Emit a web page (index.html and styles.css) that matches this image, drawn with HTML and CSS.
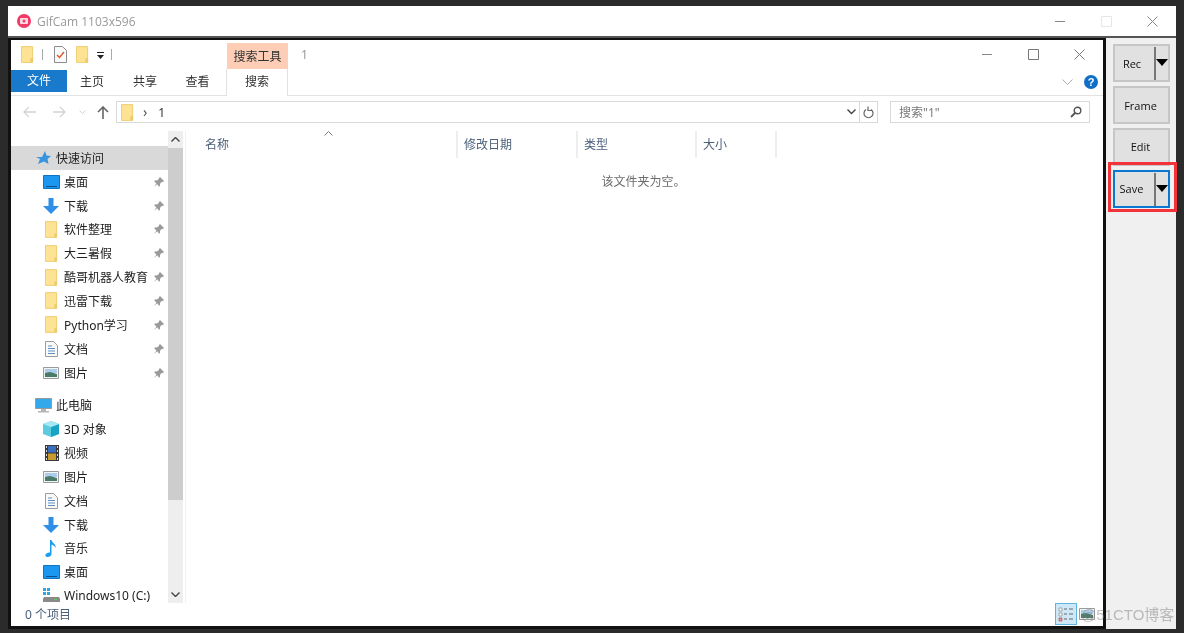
FILE: index.html
```html
<!DOCTYPE html>
<html lang="zh-CN">
<head>
    <meta charset="UTF-8">
    <title>GifCam 1103x596</title>
    <link rel="stylesheet" href="styles.css">
</head>
<body>
    <svg class="sprite" width="0" height="0">
        <symbol id="i-folder" viewBox="0 0 14 18">
            <path d="M.5.5h12v17H.5z" fill="#ffe394" stroke="#eecb6a"/>
            <path d="M10 13h3v4.5h-3z" fill="#eccb6c"/>
        </symbol>
        <symbol id="i-pin" viewBox="0 0 12 12">
            <path d="M7 1l4 4-1 1-1-.3-2 2 .1 2-1 1-2-2.400L1 11l2.400-3.600L1.200 5.300l1-1 2 .1 2-2L6 2z" fill="#9a9a9a"/>
        </symbol>
        <symbol id="i-desktop" viewBox="0 0 17 14">
            <path d="M.5.5h16v13H.5z" fill="#1b97f0" stroke="#0f74c4"/>
            <path d="M3 11.500h11" stroke="#0a4f8e"/>
        </symbol>
        <symbol id="i-down" viewBox="0 0 16 16">
            <path d="M5.500 0h5v8H16l-8 8-8-8h5.500z" fill="#2f8fe6"/>
        </symbol>
        <symbol id="i-doc" viewBox="0 0 13 16">
            <path d="M.5.500h8l4 4v11H.5z" fill="#fafafa" stroke="#9b9b9b"/>
            <path d="M3 5h4M3 7.500h7M3 10h7M3 12.500h7" stroke="#5b8fc2"/>
        </symbol>
        <symbol id="i-pic" viewBox="0 0 16 12">
            <path d="M.5.500h15v11H.5z" fill="#f3f3f3" stroke="#9b9b9b"/>
            <path d="M2 2h12v4H2z" fill="#a9cdea"/>
            <path d="M2 6l5-1 7 2v3H2z" fill="#4c7a6a"/>
        </symbol>
        <symbol id="i-film" viewBox="0 0 14 16">
            <path d="M0 0h14v16H0z" fill="#3a3a3a"/>
            <path d="M1 1h1v2H1zM1 5h1v2H1zM1 9h1v2H1zM1 13h1v2H1zM12 1h1v2h-1zM12 5h1v2h-1zM12 9h1v2h-1zM12 13h1v2h-1z" fill="#ddd"/>
            <path d="M3 1h8v6.500H3z" fill="#3a6fc0"/>
            <path d="M3 8.500h8V15H3z" fill="#c99a2e"/>
        </symbol>
        <symbol id="i-cube" viewBox="0 0 16 16">
            <path d="M8 0l8 3v10l-8 3-8-3V3z" fill="#5ccbe0"/>
            <path d="M8 6l8-3v10l-8 3z" fill="#17a3c4"/>
            <path d="M8 0l8 3-8 3-8-3z" fill="#a6e8f2"/>
        </symbol>
        <symbol id="i-note" viewBox="0 0 12 17">
            <path d="M5 0h1.500c.5 3 5 4 4 8-.5-2-2.500-3-4-3.500V14c0 2-2 3-4 3s-2.500-1.500-2-2.500S3 12 5 12.500z" fill="#1c9cf0"/>
        </symbol>
        <symbol id="i-drive" viewBox="0 0 17 14">
            <path d="M0 0h3v3H0zM4 0h3v3H4zM0 4h3v3H0zM4 4h3v3H4z" fill="#2aa5e8"/>
            <path d="M1 9h15l1 2v3H0v-3z" fill="#8a8a8a"/>
            <path d="M11 11h3v1h-3z" fill="#58d058"/>
        </symbol>
        <symbol id="i-pc" viewBox="0 0 17 15">
            <path d="M.5.500h16v10H.5z" fill="#33a8ea" stroke="#9a9a9a"/>
            <path d="M6 11h5v2H6zM3 13h11v1.500H3z" fill="#b5b5b5"/>
        </symbol>
    </svg>

    <div class="gifcam">
        <div class="titlebar">
            <svg class="app-icon" width="14" height="14" viewBox="0 0 14 14">
                <circle cx="7" cy="7" r="7" fill="#f23a66"/>
                <rect x="3" y="4" width="8" height="6" rx="1" fill="#fbdbe3"/>
                <circle cx="7" cy="7" r="1.500" fill="#f23a66"/>
            </svg>
            <span class="app-title">GifCam 1103x596</span>
            <div class="win-btns">
                <svg width="11" height="11" viewBox="0 0 11 11"><path d="M0 5.500h10" stroke="#888"/></svg>
                <svg width="11" height="11" viewBox="0 0 11 11"><path d="M.5.500h10v10H.5z" fill="none" stroke="#e6e6e6"/></svg>
                <svg width="11" height="11" viewBox="0 0 11 11"><path d="M.5.500l10 10M10.500.500l-10 10" stroke="#888"/></svg>
            </div>
        </div>

        <div class="main">
            <div class="frame">
                <div class="explorer">
                    <div class="quickbar">
                        <svg class="qa-folder" width="13" height="17"><use href="#i-folder"/></svg>
                        <span class="qa-sep"></span>
                        <svg class="qa-doc" width="13" height="17" viewBox="0 0 13 17">
                            <path d="M.5.500h8l4 4v12H.5z" fill="#fafafa" stroke="#8d8d8d"/>
                            <path d="M3 9l2.500 2.500L10 6" fill="none" stroke="#e0562a" stroke-width="1.400"/>
                        </svg>
                        <svg class="qa-folder2" width="13" height="17"><use href="#i-folder"/></svg>
                        <svg class="qa-drop" width="8" height="8" viewBox="0 0 8 8"><path d="M0 0h7v1H0zM0 3h7L3.500 7z" fill="#222"/></svg>
                        <span class="qa-sep qa-sep2"></span>
                        <div class="tool-tab">搜索工具</div>
                        <span class="win-name">1</span>
                        <div class="win-btns win-btns-inner">
                            <svg width="11" height="11" viewBox="0 0 11 11"><path d="M0 5.500h10" stroke="#888"/></svg>
                            <svg width="11" height="11" viewBox="0 0 11 11"><path d="M.5.500h10v10H.5z" fill="none" stroke="#777"/></svg>
                            <svg width="11" height="11" viewBox="0 0 11 11"><path d="M.5.500l10 10M10.500.500l-10 10" stroke="#777"/></svg>
                        </div>
                    </div>

                    <div class="tabs">
                        <div class="tab tab-file">文件</div>
                        <div class="tab tab-home">主页</div>
                        <div class="tab tab-share">共享</div>
                        <div class="tab tab-view">查看</div>
                        <div class="tab tab-search">搜索</div>
                        <svg class="ribbon-chev" width="11" height="6" viewBox="0 0 11 6"><path d="M.5.500l5 5 5-5" fill="none" stroke="#aaa"/></svg>
                        <div class="help">?</div>
                    </div>

                    <div class="addressbar">
                        <svg class="nav-arrow" width="14" height="12" viewBox="0 0 14 12"><path d="M13 6H1M6 1L1 6l5 5" fill="none" stroke="#d4d4d4" stroke-width="1.300"/></svg>
                        <svg class="nav-arrow nav-fwd" width="14" height="12" viewBox="0 0 14 12"><path d="M1 6h12M8 1l5 5-5 5" fill="none" stroke="#d4d4d4" stroke-width="1.300"/></svg>
                        <svg class="nav-small" width="7" height="4" viewBox="0 0 7 4"><path d="M.5.500l3 3 3-3" fill="none" stroke="#d4d4d4"/></svg>
                        <svg class="nav-up" width="12" height="13" viewBox="0 0 12 13"><path d="M6 13V1M1 6l5-5 5 5" fill="none" stroke="#666" stroke-width="1.600"/></svg>
                        <div class="address">
                            <svg class="addr-folder" width="13" height="17"><use href="#i-folder"/></svg>
                            <span class="addr-gt">›</span>
                            <span class="addr-path">1</span>
                            <svg class="addr-drop" width="9" height="6" viewBox="0 0 9 6"><path d="M.5.500l4 4 4-4" fill="none" stroke="#444" stroke-width="1.400"/></svg>
                            <span class="addr-refresh">
                                <svg width="11" height="13" viewBox="0 0 11 13"><path d="M8 3.500a4.500 4.500 0 1 1-5 0M6 .5v4H2" fill="none" stroke="#666" stroke-width="1.200" transform="matrix(-1 0 0 1 11 0)"/></svg>
                            </span>
                        </div>
                        <div class="searchbox">
                            <span>搜索"1"</span>
                            <svg width="12" height="12" viewBox="0 0 12 12"><circle cx="7.500" cy="4.500" r="3.300" fill="none" stroke="#555" stroke-width="1.400"/><path d="M5 7l-4 4" stroke="#555" stroke-width="1.800"/></svg>
                        </div>
                    </div>

                    <div class="panes">
                        <div class="nav">
                            <div class="nav-list">
                                <div class="row row-top row-active"><svg class="ic" width="15" height="15" viewBox="0 0 15 15"><path d="M9 1l1.500 4.500L15 6l-3.500 3 1 5L8 11.500 2 14l2-5-4-2 6 0z" fill="#3a93dd"/></svg>快速访问</div>
                                <div class="row"><svg class="ic" width="17" height="14"><use href="#i-desktop"/></svg>桌面<svg class="pin" width="12" height="12"><use href="#i-pin"/></svg></div>
                                <div class="row"><svg class="ic" width="16" height="16"><use href="#i-down"/></svg>下载<svg class="pin" width="12" height="12"><use href="#i-pin"/></svg></div>
                                <div class="row"><svg class="ic ic-f" width="13" height="17"><use href="#i-folder"/></svg>软件整理<svg class="pin" width="12" height="12"><use href="#i-pin"/></svg></div>
                                <div class="row"><svg class="ic ic-f" width="13" height="17"><use href="#i-folder"/></svg>大三暑假<svg class="pin" width="12" height="12"><use href="#i-pin"/></svg></div>
                                <div class="row"><svg class="ic ic-f" width="13" height="17"><use href="#i-folder"/></svg>酷哥机器人教育<svg class="pin" width="12" height="12"><use href="#i-pin"/></svg></div>
                                <div class="row"><svg class="ic ic-f" width="13" height="17"><use href="#i-folder"/></svg>迅雷下载<svg class="pin" width="12" height="12"><use href="#i-pin"/></svg></div>
                                <div class="row"><svg class="ic ic-f" width="13" height="17"><use href="#i-folder"/></svg>Python学习<svg class="pin" width="12" height="12"><use href="#i-pin"/></svg></div>
                                <div class="row"><svg class="ic ic-f" width="13" height="16"><use href="#i-doc"/></svg>文档<svg class="pin" width="12" height="12"><use href="#i-pin"/></svg></div>
                                <div class="row"><svg class="ic" width="16" height="12"><use href="#i-pic"/></svg>图片<svg class="pin" width="12" height="12"><use href="#i-pin"/></svg></div>
                                <div class="row row-top row-pc"><svg class="ic" width="17" height="15"><use href="#i-pc"/></svg>此电脑</div>
                                <div class="row"><svg class="ic" width="16" height="16"><use href="#i-cube"/></svg>3D 对象</div>
                                <div class="row"><svg class="ic ic-f" width="14" height="16"><use href="#i-film"/></svg>视频</div>
                                <div class="row"><svg class="ic" width="16" height="12"><use href="#i-pic"/></svg>图片</div>
                                <div class="row"><svg class="ic ic-f" width="13" height="16"><use href="#i-doc"/></svg>文档</div>
                                <div class="row"><svg class="ic" width="16" height="16"><use href="#i-down"/></svg>下载</div>
                                <div class="row"><svg class="ic ic-f" width="12" height="17"><use href="#i-note"/></svg>音乐</div>
                                <div class="row"><svg class="ic" width="17" height="14"><use href="#i-desktop"/></svg>桌面</div>
                                <div class="row"><svg class="ic" width="17" height="14"><use href="#i-drive"/></svg>Windows10 (C:)</div>
                            </div>
                            <div class="scrollbar">
                                <div class="sb-btn"><svg width="9" height="5" viewBox="0 0 9 5"><path d="M.5 4.500l4-4 4 4" fill="none" stroke="#444" stroke-width="1.400"/></svg></div>
                                <div class="sb-track"><div class="sb-thumb"></div></div>
                                <div class="sb-btn"><svg width="9" height="5" viewBox="0 0 9 5"><path d="M.5.500l4 4 4-4" fill="none" stroke="#444" stroke-width="1.400"/></svg></div>
                            </div>
                        </div>
                        <div class="files">
                            <div class="columns">
                                <div class="col col-name">名称
                                    <svg class="sort" width="9" height="5" viewBox="0 0 9 5"><path d="M.5 4.500l4-4 4 4" fill="none" stroke="#777"/></svg>
                                </div>
                                <div class="col">修改日期</div>
                                <div class="col">类型</div>
                                <div class="col">大小</div>
                            </div>
                            <div class="empty">该文件夹为空。</div>
                        </div>
                    </div>

                    <div class="statusbar">0 个项目</div>
                </div>
            </div>

            <div class="side">
                <div class="cam-btn">
                    <span class="cam-label cam-rec">Rec</span>
                    <span class="cam-split"></span>
                </div>
                <div class="cam-btn cam-plain">Frame</div>
                <div class="cam-btn cam-plain cam-low">Edit</div>
                <div class="cam-btn cam-save">
                    <span class="cam-label">Save</span>
                    <span class="cam-split"></span>
                    <div class="red-box"></div>
                </div>
            </div>
        </div>
    </div>

    <div class="view-btns">
        <span class="view-on">
            <svg width="16" height="16" viewBox="0 0 16 16"><path d="M1 2h3v3H1zM1 7h3v3H1z" fill="#fff" stroke="#777" stroke-width=".6"/><path d="M1 12h3v3H1z" fill="#e8a0a0" stroke="#a33" stroke-width=".6"/><path d="M6 3h3M11 3h4M6 8h3M11 8h4M6 13h3M11 13h4" stroke="#666"/></svg>
        </span>
        <svg width="16" height="12"><use href="#i-pic"/></svg>
    </div>
    <div class="watermark">@51CTO博客</div>
</body>
</html>
```

FILE: styles.css
```css
* {
    box-sizing: border-box;
}
html, body {
    margin: 0;
    height: 633px;
    overflow: hidden;
}
body {
    position: relative;
    background: #2b2b2b;
    padding: 6px 8px 4px 8px;
    font-family: "Noto Sans", "Noto Sans CJK SC", sans-serif;
    font-size: 12px;
    color: #222;
    filter: blur(0.3px);
}
.sprite {
    position: absolute;
}
svg {
    display: block;
    flex: none;
}
.gifcam {
    height: 623px;
    display: flex;
    flex-direction: column;
    background: #f0f0f0;
}
.titlebar {
    height: 30px;
    background: #fff;
    display: flex;
    align-items: center;
    padding-left: 9px;
}
.app-title {
    margin-left: 6px;
    color: #9a9a9a;
    font-family: "Open Sans", sans-serif;
    font-size: 12px;
}
.win-btns {
    margin-left: auto;
    margin-right: 18px;
    display: flex;
    gap: 35px;
}
.main {
    flex: 1;
    display: flex;
    min-height: 0;
    border-top: 2px solid #555;
}
.frame {
    width: 1098px;
    border: 3px solid #111;
    border-top-width: 2px;
    background: #fff;
}
.explorer {
    height: 100%;
    display: flex;
    flex-direction: column;
    background: #fff;
}

/* ribbon */
.quickbar {
    height: 29px;
    display: flex;
    align-items: flex-end;
    position: relative;
    padding-bottom: 6px;
}
.qa-folder {
    margin-left: 10px;
}
.qa-sep {
    width: 1px;
    height: 11px;
    background: #aaa;
    margin: 0 0 3px 8px;
}
.qa-doc {
    margin-left: 11px;
}
.qa-folder2 {
    margin-left: 9px;
}
.qa-drop {
    margin: 0 0 3px 8px;
}
.qa-sep2 {
    margin-left: 6px;
}
.tool-tab {
    margin: 0 0 -6px 115px;
    width: 61px;
    height: 26px;
    background: #fdcdb6;
    text-align: center;
    line-height: 27px;
    color: #333;
}
.win-name {
    margin: 0 0 -2px 13px;
    color: #999;
    line-height: 20px;
}
.win-btns-inner {
    margin-right: 18px;
    margin-bottom: 3px;
}
.tabs {
    height: 27px;
    display: flex;
    position: relative;
    border-bottom: 1px solid #e2e2e2;
}
.tab {
    height: 26px;
    line-height: 26px;
    text-align: center;
    color: #333;
}
.tab-file {
    width: 56px;
    height: 22px;
    margin-top: 1px;
    line-height: 22px;
    background: #1979ca;
    color: #fff;
}
.tab-home {
    width: 50px;
}
.tab-share {
    width: 56px;
}
.tab-view {
    width: 49px;
}
.tab-search {
    width: 62px;
    margin-left: 4px;
    border-left: 1px solid #e2e2e2;
    border-right: 1px solid #e2e2e2;
    background: #fff;
    height: 27px;
}
.ribbon-chev {
    margin: 10px 0 0 auto;
}
.help {
    width: 14px;
    height: 14px;
    margin: 6px 5px 0 11px;
    border-radius: 50%;
    background: #0f6fc6;
    color: #fff;
    font-family: "Liberation Sans", sans-serif;
    font-size: 11px;
    font-weight: bold;
    line-height: 14px;
    text-align: center;
}

/* address */
.addressbar {
    height: 35px;
    display: flex;
    align-items: center;
    padding-bottom: 3px;
}
.nav-arrow {
    margin-left: 12px;
}
.nav-fwd {
    margin-left: 15px;
}
.nav-small {
    margin-left: 13px;
}
.nav-up {
    margin-left: 11px;
}
.address {
    margin-left: 7px;
    width: 762px;
    height: 22px;
    border: 1px solid #d9d9d9;
    display: flex;
    align-items: center;
}
.addr-folder {
    margin-left: 4px;
}
.addr-gt {
    margin-left: 9px;
    color: #555;
    font-size: 14px;
    line-height: 18px;
}
.addr-path {
    margin-left: 11px;
    color: #333;
}
.addr-drop {
    margin-left: auto;
    margin-right: 3px;
}
.addr-refresh {
    width: 18px;
    height: 20px;
    border-left: 1px solid #d9d9d9;
    display: flex;
    align-items: center;
    justify-content: center;
}
.searchbox {
    margin-left: 12px;
    width: 200px;
    height: 22px;
    border: 1px solid #d9d9d9;
    display: flex;
    align-items: center;
    justify-content: space-between;
    padding: 0 7px 0 8px;
    color: #7a7a7a;
}

/* panes */
.panes {
    flex: 1;
    display: flex;
    min-height: 0;
}
.nav {
    width: 175px;
    flex: none;
    display: flex;
    border-right: 1px solid #f0f0f0;
    padding-right: 2px;
}
.nav-list {
    width: 157px;
    flex: none;
    padding-top: 15px;
}
.row {
    height: 23.85px;
    display: flex;
    align-items: center;
    padding-left: 53px;
    position: relative;
    white-space: nowrap;
    color: #222;
}
.row:last-child {
    height: 22px;
}
.row .ic {
    position: absolute;
    left: 32px;
}
.row .ic-f {
    left: 34px;
}
.row-top {
    padding-left: 45px;
}
.row-top .ic {
    left: 25px;
}
.row-pc .ic {
    left: 24px;
}
.row-active {
    background: #d9d9d9;
}
.row-pc {
    margin-top: 9px;
}
.pin {
    position: absolute;
    right: 3px;
}
.scrollbar {
    width: 15px;
    flex: none;
    background: #eee;
    display: flex;
    flex-direction: column;
}
.sb-btn {
    height: 17px;
    display: flex;
    align-items: center;
    justify-content: center;
}
.sb-track {
    flex: 1;
}
.sb-thumb {
    height: 352px;
    background: #cdcdcd;
}
.files {
    flex: 1;
}
.columns {
    height: 27px;
    display: flex;
    color: #4c607a;
    line-height: 27px;
}
.col {
    padding-left: 6px;
    border-right: 2px solid #eee;
    width: 119px;
    flex: none;
}
.col:nth-child(2) {
    width: 120px;
}
.col:last-child {
    width: 80px;
}
.col-name {
    width: 272px;
    padding-left: 19px;
    position: relative;
}
.sort {
    position: absolute;
    left: 138px;
    top: 0;
}
.empty {
    margin-top: 14px;
    padding-right: 2px;
    text-align: center;
    color: #6d6d6d;
}
.statusbar {
    height: 23px;
    padding-left: 14px;
    line-height: 23px;
    color: #4c607a;
}

/* gifcam buttons */
.side {
    flex: 1;
    padding: 6px 6px 0 7px;
    display: flex;
    flex-direction: column;
    gap: 4px;
}
.cam-btn {
    height: 38px;
    background: #e1e1e1;
    border: 2px solid #c6c6c6;
    font-family: "Open Sans", sans-serif;
    font-size: 11px;
    color: #111;
    display: flex;
    align-items: center;
    position: relative;
}
.cam-plain {
    justify-content: center;
    padding-right: 2px;
}
.cam-low {
    padding-bottom: 2px;
}
.cam-label {
    width: 33px;
    margin-right: 6px;
    text-align: center;
}
.cam-rec {
    width: 34px;
    margin-right: 5px;
}
.cam-split {
    width: 2px;
    height: 33px;
    background: #777;
}
.cam-split::after {
    content: "";
    position: absolute;
    right: 0;
    top: 13px;
    border: 6px solid transparent;
    border-top: 7px solid #000;
    border-bottom: 0;
}
.cam-save {
    border-color: #0a78d0;
}
.cam-save .cam-label {
    margin-bottom: 2px;
}
.red-box {
    position: absolute;
    left: -7px;
    top: -10px;
    right: -9px;
    bottom: -6px;
    border: 3px solid #f2333a;
}

/* things lying over the window corner */
.view-btns {
    position: absolute;
    left: 1055px;
    top: 603px;
    display: flex;
    align-items: center;
    gap: 2px;
}
.view-on {
    width: 22px;
    height: 22px;
    background: #cfe8f7;
    border: 1px solid #5fb4e0;
    display: flex;
    align-items: center;
    justify-content: center;
}
.watermark {
    position: absolute;
    left: 1081px;
    top: 603px;
    font-family: "Liberation Sans", "Noto Sans CJK SC", sans-serif;
    font-size: 15px;
    line-height: 24px;
    color: rgba(130, 130, 130, 0.5);
}
```
